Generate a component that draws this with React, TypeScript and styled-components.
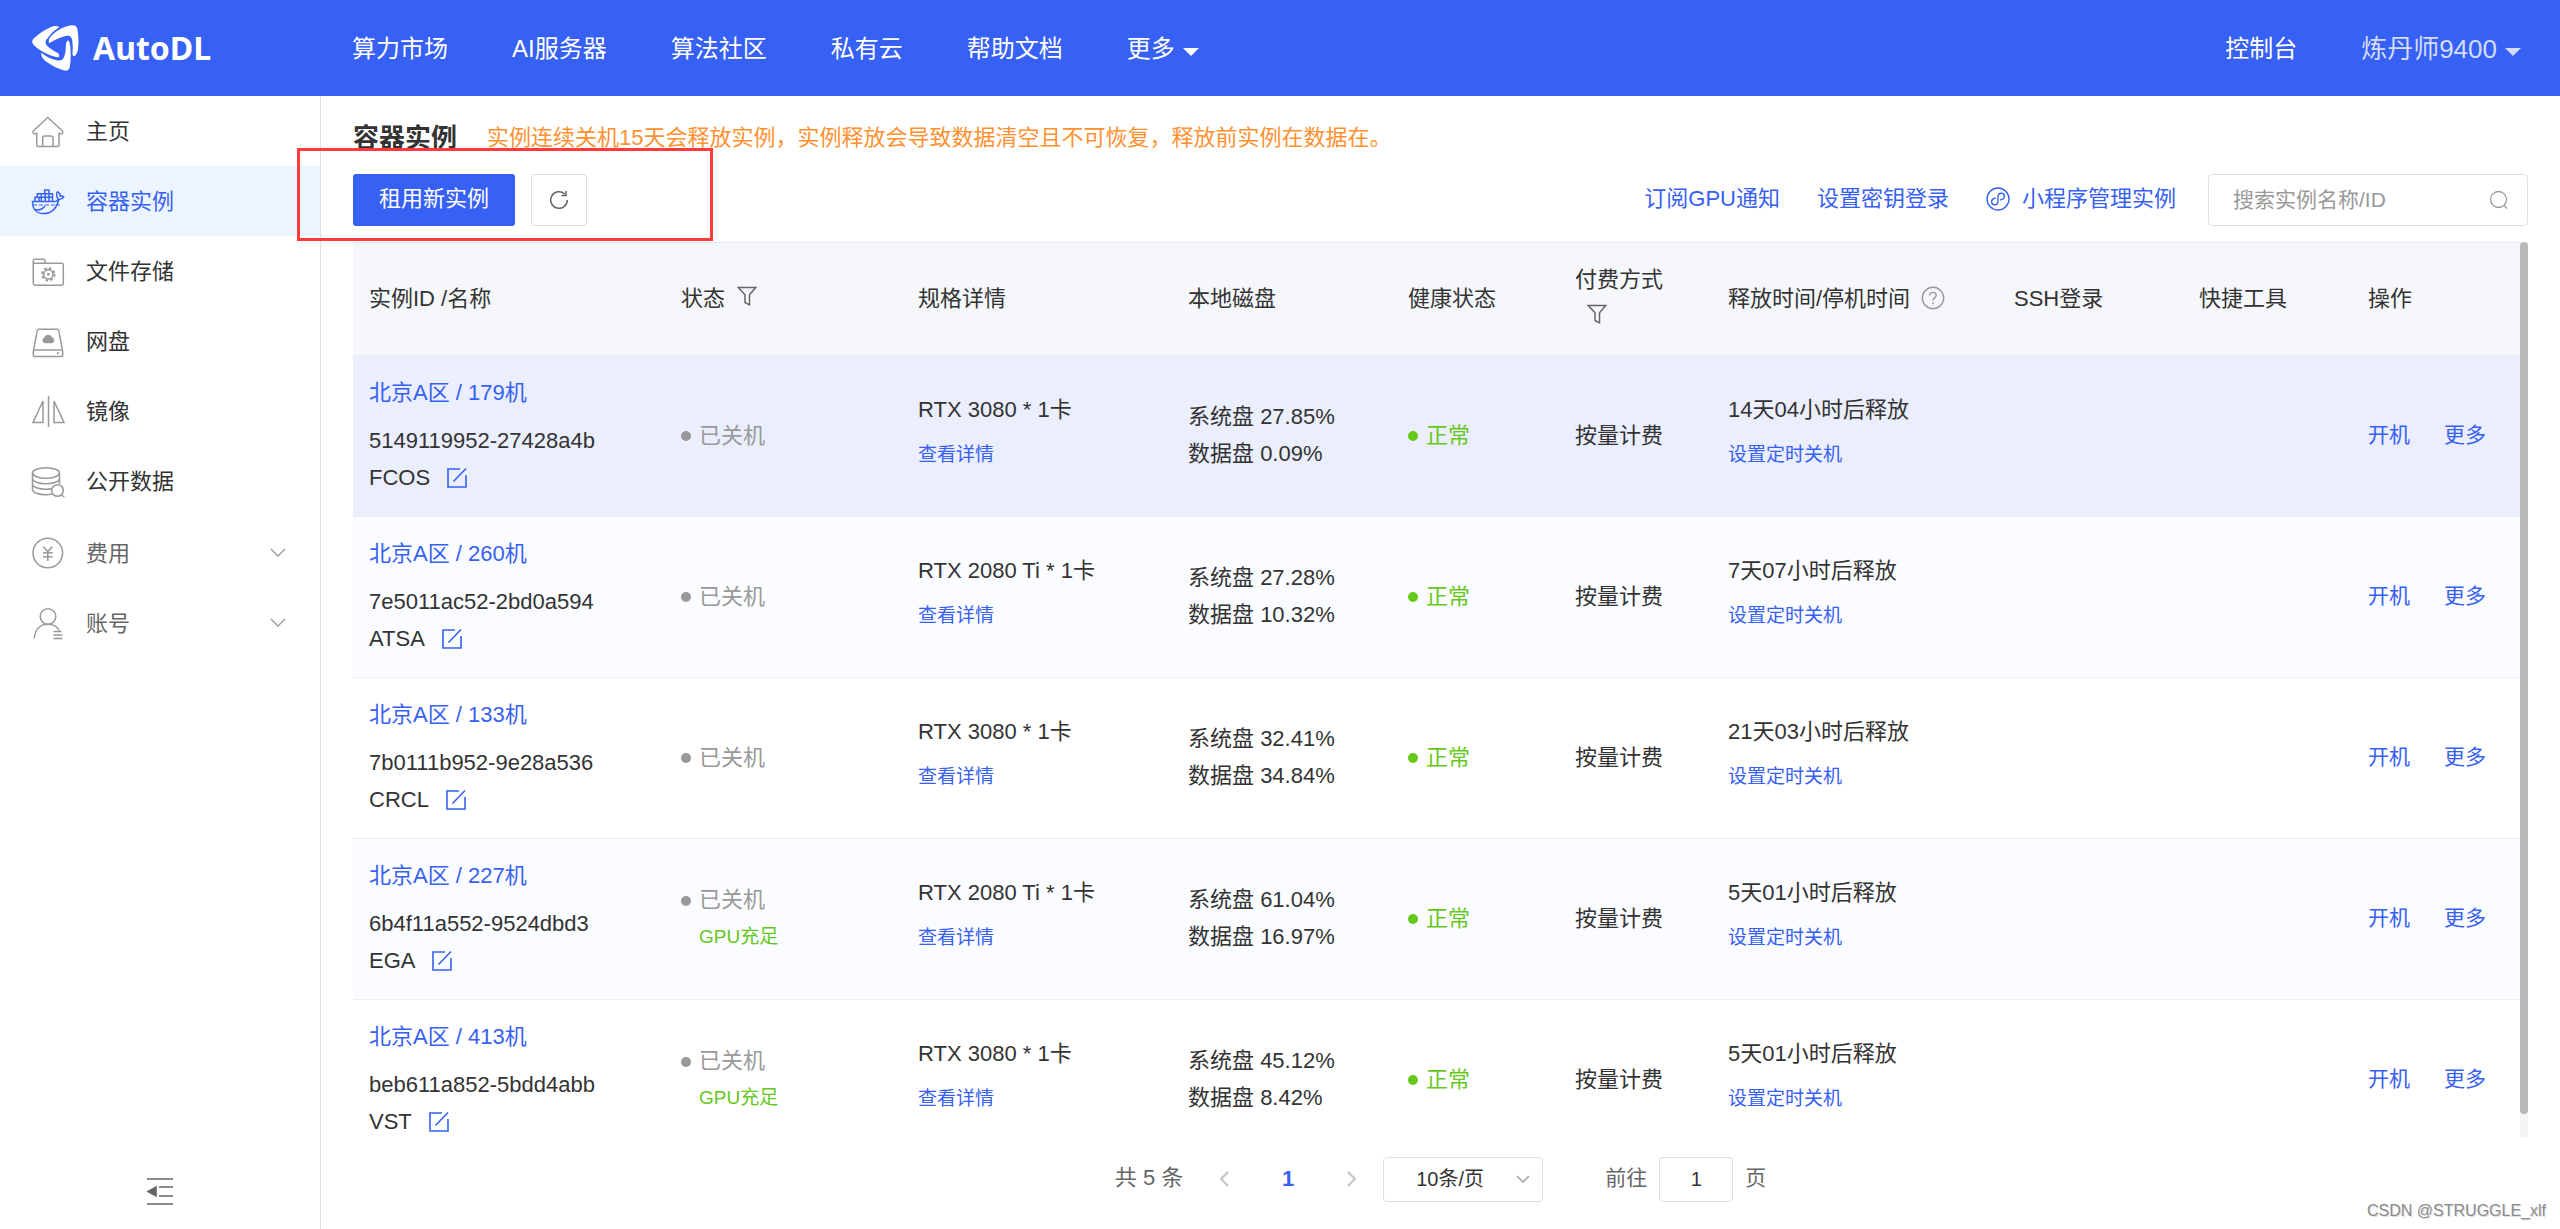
import React from "react";
import styled, { createGlobalStyle, css } from "styled-components";

const color = {
  primary: "#3760f4",
  text: "#333333",
  secondary: "#666666",
  muted: "#999999",
  border: "#dcdfe6",
  line: "#ebeef5",
  success: "#66c81b",
  warning: "#ff9130",
};

const GlobalStyle = createGlobalStyle`
  * { box-sizing: border-box; }
  body { margin: 0; background: #fff; }
  body, button, input, select {
    font-family: "Liberation Sans", "Noto Sans CJK SC", sans-serif;
    font-size: 22px;
    line-height: 36px;
    color: ${color.text};
  }
  a { color: inherit; text-decoration: none; }
  button { border: 0; padding: 0; background: none; color: inherit; cursor: pointer; }
  svg { display: block; flex: none; }
`;

const Page = styled.div`
  display: flex;
  flex-direction: column;
  height: 100vh;
`;

/* ---------- top bar ---------- */

const TopBar = styled.header`
  display: flex;
  align-items: center;
  flex: none;
  height: 96px;
  padding: 0 39px 0 32px;
  background: ${color.primary};
  color: #fff;
`;

const Brand = styled.a`
  display: flex;
  align-items: center;
  gap: 14px;
  width: 320px;
  font-family: "Noto Sans", sans-serif;
  font-size: 32px;
  font-weight: 700;
  line-height: 48px;
`;

const TopNav = styled.nav`
  display: flex;
  flex: 1;
  gap: 64px;
  padding-top: 2px;
`;

const TopActions = styled.div`
  display: flex;
  align-items: center;
  gap: 64px;
  padding-top: 2px;
`;

const topItem = css`
  display: flex;
  align-items: center;
  gap: 8px;
  font-size: 24px;
  line-height: 38px;
  color: #fff;
`;

const TopLink = styled.a`
  ${topItem}
`;

const TopMenu = styled.button<{ $user?: boolean }>`
  ${topItem}
  ${(p) => p.$user && "font-size: 26px; color: #d3dcfd;"}
  svg {
    margin-top: 4px;
  }
`;

/* ---------- side bar ---------- */

const Body = styled.div`
  display: flex;
  flex: 1;
  min-height: 0;
`;

const SideBar = styled.aside`
  display: flex;
  flex-direction: column;
  flex: none;
  width: 321px;
  border-right: 1px solid ${color.border};
`;

const SideGroup = styled.nav`
  & + & {
    margin-top: 2px;
  }
`;

const sideItem = css`
  display: flex;
  align-items: center;
  gap: 21px;
  width: 100%;
  height: 70px;
  padding: 0 34px 0 31px;
  text-align: left;
  svg {
    color: ${color.muted};
  }
`;

const SideLink = styled.a<{ $active?: boolean }>`
  ${sideItem}
  ${(p) =>
    p.$active &&
    css`
      background: #ecf5ff;
      color: ${color.primary};
      svg {
        color: ${color.primary};
      }
    `}
`;

const SideToggle = styled.button`
  ${sideItem}
  color: ${color.secondary};
`;

const SideLabel = styled.span`
  flex: 1;
  padding-top: 2px;
`;

const CollapseButton = styled.button`
  display: flex;
  justify-content: center;
  margin-top: auto;
  padding-bottom: 22px;
  color: ${color.secondary};
`;

/* ---------- content ---------- */

const Content = styled.main`
  display: flex;
  flex: 1;
  flex-direction: column;
  min-width: 0;
  padding: 24px 32px 0;
`;

const Heading = styled.div`
  display: flex;
  align-items: center;
  gap: 30px;
  margin-bottom: 18px;
`;

const Title = styled.h1`
  margin: 0;
  font-size: 26px;
  font-weight: 700;
`;

const Notice = styled.p`
  margin: 0;
  color: ${color.warning};
`;

const ToolBar = styled.div`
  position: relative;
  display: flex;
  align-items: center;
  gap: 16px;
  height: 52px;
  margin-bottom: 16px;
`;

const Highlight = styled.div`
  position: absolute;
  left: -56px;
  top: -26px;
  width: 416px;
  height: 93px;
  border: 3px solid #ff3a3a;
  pointer-events: none;
`;

const PrimaryButton = styled.button`
  width: 162px;
  height: 52px;
  padding-bottom: 2px;
  border-radius: 3px;
  background: ${color.primary};
  color: #fff;
`;

const IconButton = styled.button`
  display: flex;
  align-items: center;
  justify-content: center;
  width: 56px;
  height: 52px;
  border: 1px solid ${color.border};
  border-radius: 3px;
  color: ${color.secondary};
`;

const ToolLinks = styled.div`
  display: flex;
  align-items: center;
  gap: 37px;
  margin-left: auto;
  padding-bottom: 2px;
  color: ${color.primary};
`;

const ToolLink = styled.a`
  display: flex;
  align-items: center;
  gap: 12px;
`;

const SearchBox = styled.label`
  display: flex;
  align-items: center;
  width: 320px;
  height: 52px;
  margin-left: 16px;
  padding: 0 18px 0 24px;
  border: 1px solid ${color.border};
  border-radius: 4px;
  color: ${color.muted};
  input {
    flex: 1;
    min-width: 0;
    border: 0;
    padding: 0;
    outline: 0;
    background: none;
    font-size: 21px;
  }
  input::placeholder {
    color: ${color.muted};
    opacity: 1;
  }
`;

/* ---------- table ---------- */

const TableFrame = styled.div`
  display: flex;
  flex: 1;
  min-height: 0;
`;

const TableScroll = styled.div`
  flex: 1;
  min-width: 0;
  overflow: hidden;
`;

const ScrollTrack = styled.div`
  width: 8px;
  background: #f5f5f5;
`;

const ScrollThumb = styled.div`
  height: calc(100% - 23px);
  border-radius: 4px;
  background: #b8b8b8;
`;

const Table = styled.table`
  width: 100%;
  table-layout: fixed;
  border-collapse: separate;
  border-spacing: 0;
  line-height: 37px;
`;

const Col = styled.col<{ $w: number }>`
  width: ${(p) => p.$w}px;
`;

const Th = styled.th`
  height: 114px;
  padding: 0 16px 2px;
  border-top: 1px solid #e4e8f4;
  border-bottom: 1px solid ${color.line};
  background: #f5f7fb;
  font-weight: 400;
  text-align: left;
`;

const FilterButton = styled.button`
  margin: 0 12px;
  line-height: 20px;
  color: ${color.secondary};
  svg {
    display: inline-block;
    vertical-align: baseline;
  }
`;

const HelpMark = styled.span`
  margin-left: 11px;
  color: ${color.muted};
  svg {
    display: inline-block;
    vertical-align: -4px;
  }
`;

const Row = styled.tr<{ $tone: "hover" | "stripe" | "plain" }>`
  background: ${(p) => ({ hover: "#eaeefd", stripe: "#fafcff", plain: "#ffffff" })[p.$tone]};
`;

const Td = styled.td`
  height: 161px;
  padding: 0 16px 2px;
  border-bottom: 1px solid ${color.line};
  vertical-align: middle;
  white-space: nowrap;
`;

const Machine = styled.div`
  margin-bottom: 11px;
  color: ${color.primary};
`;

const NameLine = styled.div`
  display: flex;
  align-items: center;
  gap: 16px;
  button {
    color: ${color.primary};
  }
`;

const Status = styled.div<{ $ok?: boolean }>`
  display: flex;
  align-items: center;
  gap: 8px;
  color: ${(p) => (p.$ok ? color.success : color.muted)};
  &::before {
    content: "";
    width: 10px;
    height: 10px;
    margin-top: 2px;
    border-radius: 50%;
    background: currentColor;
  }
`;

const GpuHint = styled.div`
  padding-left: 18px;
  font-size: 19px;
  color: ${color.success};
`;

const Stack = styled.div`
  display: flex;
  flex-direction: column;
  align-items: flex-start;
  gap: 8px;
  padding-bottom: 7px;
`;

const SmallLink = styled.a`
  font-size: 19px;
  color: ${color.primary};
`;

const RowActions = styled.div`
  display: flex;
  gap: 34px;
  button {
    font-size: 21px;
    color: ${color.primary};
  }
`;

/* ---------- pagination ---------- */

const Pagination = styled.footer`
  position: relative;
  display: flex;
  align-items: center;
  justify-content: center;
  flex: none;
  height: 92px;
  padding-bottom: 8px;
  color: ${color.secondary};
`;

const Total = styled.span`
  padding-bottom: 3px;
`;

const Pager = styled.div`
  display: flex;
  align-items: center;
  justify-content: space-between;
  width: 138px;
  margin: 0 26px 0 36px;
  color: #c0c4cc;
`;

const PageNumber = styled.button`
  font-weight: 700;
  color: ${color.primary};
`;

const SizePicker = styled.div`
  position: relative;
  width: 160px;
  margin-right: 62px;
  color: ${color.muted};
  select {
    appearance: none;
    display: block;
    width: 100%;
    height: 45px;
    padding: 0 32px;
    border: 1px solid ${color.border};
    border-radius: 4px;
    background: #fff;
    font-size: 20px;
  }
  svg {
    position: absolute;
    right: 13px;
    top: 18px;
    pointer-events: none;
  }
`;

const Jump = styled.div`
  display: flex;
  align-items: center;
  gap: 12px;
  font-size: 21px;
  label,
  span {
    padding-bottom: 3px;
  }
  input {
    width: 74px;
    height: 45px;
    border: 1px solid ${color.border};
    border-radius: 4px;
    font-size: 20px;
    text-align: center;
  }
`;

const Watermark = styled.small`
  position: absolute;
  right: -18px;
  bottom: 8px;
  font-size: 16px;
  line-height: 20px;
  color: #8c8c8c;
  text-shadow: 1px 1px 0 #dddddd;
`;

/* ---------- drawings ---------- */

const Logo = () => (
  <svg width="47" height="46" viewBox="36 44 140 138" fill="#fff" aria-hidden="true">
    <path d="M118 50C107 45 99 47 88 52C70 60 54 72 41 84C34 92 35 98 43 106C60 122 86 135 112 141C118 141 119 134 114 129C102 122 92 116 84 109C74 101 74 93 82 84C92 70 103 59 118 50Z" />
    <path d="M87 99C83 90 88 81 98 72C114 58 133 48 152 45C164 43 170 47 172 58C175 75 176 95 174 112C173 124 170 132 163 137C159 138 157 135 157 130C158 115 158 102 156 90C154 78 148 75 137 77C119 81 102 89 87 99Z" />
    <path d="M64 127C61 137 68 146 80 155C95 166 113 175 130 180C141 183 147 179 149 169C152 152 152 135 151 118C151 107 149 98 145 90C139 92 137 98 137 106C137 117 136 127 133 136C129 149 122 152 110 150C94 147 78 139 64 127Z" />
  </svg>
);

const Caret = () => (
  <svg width="16" height="9" viewBox="0 0 16 9" fill="currentColor" aria-hidden="true">
    <path d="M0 1h16L8 9z" />
  </svg>
);

const SideIcon = ({ children }: { children: React.ReactNode }) => (
  <svg width="34" height="34" viewBox="0 0 34 34" fill="none" stroke="currentColor" strokeWidth="1.5" strokeLinejoin="round" aria-hidden="true">
    {children}
  </svg>
);

const HomeIcon = () => (
  <SideIcon>
    <path d="M16.7 3.5 2.2 17c-.6 1.500 0 2.800 1.300 2.800l2.300-.5V31c0 .9.6 1.500 1.500 1.500h19.200c.9 0 1.500-.6 1.500-1.500V19.300l2.300.5c1.300 0 1.900-1.300 1.200-2.800z" />
    <path d="M11.700 32.500V24c0-1.100.9-2 2-2H20c1.100 0 2 .9 2 2v8.500" />
  </SideIcon>
);

const DockerIcon = () => (
  <SideIcon>
    <path d="M1.500 17.500H23.500C25.500 17.500 27.200 16.500 26.800 14.500C25.300 12 25.300 9.500 26.500 7.700C28.500 9 29.300 11 29.200 12.300C30.500 11.800 32 12 32.800 12.800C31.800 14.600 30 15.300 28 15.200C25.800 23.500 20.500 29.600 12.500 29.600C5.500 29.600 1.500 25 1.500 17.500Z" />
    <path d="M4 17.300v-4h17.500v4M6.300 13.300V9.700h15.200v3.600M13.700 9.700V6H18v3.700M8 13.300v4M10.300 9.700v7.600M14.200 9.700v7.600M18 9.700v7.600" />
    <path d="M2 21h27" strokeWidth="1" strokeDasharray="4 2" />
    <path d="M3.500 25.500c4 1 8 0 10.500-3.500" />
  </SideIcon>
);

const FolderIcon = () => (
  <SideIcon>
    <path d="M2.300 9.300V6.800c0-.8.7-1.500 1.500-1.500h8.700c.8 0 1.500.7 1.500 1.500v2.500" />
    <path d="M2.300 9.300h28c1.100 0 2 .9 2 2v18c0 1.100-.9 2-2 2h-26c-1.100 0-2-.9-2-2z" />
    <circle cx="17.300" cy="20.300" r="4.700" strokeWidth="1.600" />
    <circle cx="17.300" cy="20.300" r="6.200" strokeWidth="2" strokeDasharray="2.400 2.470" />
    <circle cx="17.300" cy="20.300" r="1.400" fill="currentColor" stroke="none" />
  </SideIcon>
);

const DiskIcon = () => (
  <SideIcon>
    <path d="M2.500 26 6.200 6.800c.2-.9.800-1.500 1.700-1.500h18.200c.9 0 1.500.6 1.700 1.500L31.500 26" />
    <rect x="2.300" y="26" width="29.400" height="6.500" rx="1.800" />
    <path d="M14 19.200a2.900 2.900 0 0 1-.5-5.700 4 4 0 0 1 7.600 0 2.900 2.900 0 0 1-.4 5.700z" fill="currentColor" stroke="none" />
    <circle cx="26.800" cy="29.200" r="1.100" fill="currentColor" stroke="none" />
  </SideIcon>
);

const MirrorIcon = () => (
  <SideIcon>
    <path d="M17.500 2v31M12 7v21.500H2zM23 7v21.500h10z" strokeLinejoin="miter" />
  </SideIcon>
);

const DataIcon = () => (
  <SideIcon>
    <ellipse cx="15" cy="9" rx="13.500" ry="5.300" />
    <path d="M1.500 9v16.500c0 3 6 5.300 13.500 5.300 2.400 0 4.600-.2 6.500-.7M28.500 9v11" />
    <path d="M1.500 14.500c0 3 6 5.300 13.500 5.300s13.500-2.300 13.500-5.300M1.500 20c0 3 6 5.300 13.500 5.300 2 0 3.800-.1 5.400-.5" />
    <circle cx="26.500" cy="26.500" r="5.800" />
    <path d="m30.500 31 2.800 2" />
  </SideIcon>
);

const CostIcon = () => (
  <SideIcon>
    <circle cx="16.800" cy="17" r="14.800" />
    <path d="m12.300 10.500 4.500 5.300 4.500-5.300M16.800 15.800V25M12 16.800h9.600M12 20.800h9.600" />
  </SideIcon>
);

const AccountIcon = () => (
  <SideIcon>
    <circle cx="17" cy="10.500" r="7.800" />
    <path d="M3.300 32.500C4 23.500 9 18.300 17 18.300c5 0 9 2.200 11.300 6.200M22.500 25.500h8M22.500 29h9M22.500 32.500h9" strokeWidth="1.400" />
  </SideIcon>
);

const Chevron = ({ w, h, d, sw = 1.3 }: { w: number; h: number; d: string; sw?: number }) => (
  <svg width={w} height={h} viewBox={`0 0 ${w} ${h}`} fill="none" stroke="currentColor" strokeWidth={sw} aria-hidden="true">
    <path d={d} />
  </svg>
);

const CollapseIcon = () => (
  <svg width="28" height="30" viewBox="0 0 28 30" stroke="currentColor" strokeWidth="1.600" fill="none" aria-hidden="true">
    <path d="M1 2h26M13 10h14M13 19h14M1 27h26" />
    <path d="M10 10v9l-8-4.500z" fill="currentColor" />
  </svg>
);

const RefreshIcon = () => (
  <svg width="20" height="20" viewBox="0 0 20 20" fill="none" stroke="currentColor" strokeWidth="1.500" aria-hidden="true">
    <path d="M18.300 10a8.300 8.300 0 1 1-2.600-6M17 1v4.600h-4.600" />
  </svg>
);

const MiniProgramIcon = () => (
  <svg width="24" height="24" viewBox="0 0 24 24" fill="none" stroke="currentColor" strokeWidth="1.400" aria-hidden="true">
    <circle cx="12" cy="12" r="11" />
    <path d="M9.300 11.200c-2.300.3-3.700 1.800-3.700 3.500 0 1.800 1.400 3 3 3 2 0 3.400-1.500 3.400-3.500V9.800c0-2 1.400-3.500 3.400-3.500 1.600 0 3 1.200 3 3 0 1.700-1.400 3.200-3.700 3.500" strokeLinecap="round" />
  </svg>
);

const SearchIcon = () => (
  <svg width="20" height="20" viewBox="0 0 20 20" fill="none" stroke="currentColor" strokeWidth="1.300" aria-hidden="true">
    <circle cx="9.500" cy="9.500" r="8" />
    <path d="m15 15.500 3 3" />
  </svg>
);

const FilterIcon = () => (
  <svg width="20" height="20" viewBox="0 0 20 20" fill="none" stroke="currentColor" strokeWidth="1.500" aria-hidden="true">
    <path d="M1.300 1.500h17.400l-6.200 7.300v10l-4.500-2.300V8.800z" />
  </svg>
);

const HelpIcon = () => (
  <svg width="24" height="24" viewBox="0 0 24 24" fill="none" stroke="currentColor" strokeWidth="1.400" aria-hidden="true">
    <circle cx="12" cy="12" r="10.700" />
    <path d="M8.800 9.500c0-1.900 1.400-3.100 3.200-3.100s3.200 1.200 3.200 2.900c0 2.500-3.200 2.600-3.200 5.200M12 16.200v2" />
  </svg>
);

const EditIcon = () => (
  <svg width="22" height="22" viewBox="0 0 22 22" fill="none" stroke="currentColor" strokeWidth="1.600" aria-hidden="true">
    <path d="M14 2H2v18h18V8M7.500 14.500 20 1.500" />
  </svg>
);

/* ---------- data ---------- */

const topLinks = ["算力市场", "AI服务器", "算法社区", "私有云", "帮助文档"];

const sideLinks = [
  { label: "主页", icon: <HomeIcon /> },
  { label: "容器实例", icon: <DockerIcon />, active: true },
  { label: "文件存储", icon: <FolderIcon /> },
  { label: "网盘", icon: <DiskIcon /> },
  { label: "镜像", icon: <MirrorIcon /> },
  { label: "公开数据", icon: <DataIcon /> },
];

const sideMenus = [
  { label: "费用", icon: <CostIcon /> },
  { label: "账号", icon: <AccountIcon /> },
];

const columns: { label: string; width: number; filter?: boolean; help?: boolean }[] = [
  { label: "实例ID /名称", width: 312 },
  { label: "状态", width: 237, filter: true },
  { label: "规格详情", width: 270 },
  { label: "本地磁盘", width: 220 },
  { label: "健康状态", width: 167 },
  { label: "付费方式", width: 153, filter: true },
  { label: "释放时间/停机时间", width: 286, help: true },
  { label: "SSH登录", width: 185 },
  { label: "快捷工具", width: 169 },
  { label: "操作", width: 168 },
];

const instances = [
  { machine: "179机", id: "5149119952-27428a4b", name: "FCOS", gpu: "RTX 3080 * 1卡", sys: "27.85%", data: "0.09%", release: "14天04小时后释放" },
  { machine: "260机", id: "7e5011ac52-2bd0a594", name: "ATSA", gpu: "RTX 2080 Ti * 1卡", sys: "27.28%", data: "10.32%", release: "7天07小时后释放" },
  { machine: "133机", id: "7b0111b952-9e28a536", name: "CRCL", gpu: "RTX 3080 * 1卡", sys: "32.41%", data: "34.84%", release: "21天03小时后释放" },
  { machine: "227机", id: "6b4f11a552-9524dbd3", name: "EGA", gpu: "RTX 2080 Ti * 1卡", sys: "61.04%", data: "16.97%", release: "5天01小时后释放", enough: true },
  { machine: "413机", id: "beb611a852-5bdd4abb", name: "VST", gpu: "RTX 3080 * 1卡", sys: "45.12%", data: "8.42%", release: "5天01小时后释放", enough: true },
];

export default function App() {
  return (
    <Page>
      <GlobalStyle />
      <TopBar>
        <Brand href="#">
          <Logo />
          AutoDL
        </Brand>
        <TopNav>
          {topLinks.map((label) => (
            <TopLink href="#" key={label}>
              {label}
            </TopLink>
          ))}
          <TopMenu>
            更多
            <Caret />
          </TopMenu>
        </TopNav>
        <TopActions>
          <TopLink href="#">控制台</TopLink>
          <TopMenu $user>
            炼丹师9400
            <Caret />
          </TopMenu>
        </TopActions>
      </TopBar>

      <Body>
        <SideBar>
          <SideGroup>
            {sideLinks.map((item) => (
              <SideLink href="#" key={item.label} $active={item.active}>
                {item.icon}
                <SideLabel>{item.label}</SideLabel>
              </SideLink>
            ))}
          </SideGroup>
          <SideGroup>
            {sideMenus.map((item) => (
              <SideToggle key={item.label}>
                {item.icon}
                <SideLabel>{item.label}</SideLabel>
                <Chevron w={16} h={10} d="M1 1l7 7 7-7" />
              </SideToggle>
            ))}
          </SideGroup>
          <CollapseButton aria-label="收起菜单">
            <CollapseIcon />
          </CollapseButton>
        </SideBar>

        <Content>
          <Heading>
            <Title>容器实例</Title>
            <Notice>实例连续关机15天会释放实例，实例释放会导致数据清空且不可恢复，释放前实例在数据在。</Notice>
          </Heading>

          <ToolBar>
            <PrimaryButton>租用新实例</PrimaryButton>
            <IconButton aria-label="刷新">
              <RefreshIcon />
            </IconButton>
            <ToolLinks>
              <ToolLink href="#">订阅GPU通知</ToolLink>
              <ToolLink href="#">设置密钥登录</ToolLink>
              <ToolLink href="#">
                <MiniProgramIcon />
                小程序管理实例
              </ToolLink>
            </ToolLinks>
            <SearchBox>
              <input type="text" placeholder="搜索实例名称/ID" aria-label="搜索实例名称/ID" />
              <SearchIcon />
            </SearchBox>
            <Highlight />
          </ToolBar>

          <TableFrame>
            <TableScroll>
              <Table>
                <colgroup>
                  {columns.map((c) => (
                    <Col key={c.label} $w={c.width} />
                  ))}
                </colgroup>
                <thead>
                  <tr>
                    {columns.map((c) => (
                      <Th key={c.label}>
                        {c.label}
                        {c.filter && (
                          <FilterButton aria-label="筛选">
                            <FilterIcon />
                          </FilterButton>
                        )}
                        {c.help && (
                          <HelpMark>
                            <HelpIcon />
                          </HelpMark>
                        )}
                      </Th>
                    ))}
                  </tr>
                </thead>
                <tbody>
                  {instances.map((it, i) => (
                    <Row key={it.id} $tone={i === 0 ? "hover" : i % 2 ? "stripe" : "plain"}>
                      <Td>
                        <Machine>北京A区 / {it.machine}</Machine>
                        <div>{it.id}</div>
                        <NameLine>
                          {it.name}
                          <button aria-label="修改名称">
                            <EditIcon />
                          </button>
                        </NameLine>
                      </Td>
                      <Td>
                        <Status>已关机</Status>
                        {it.enough && <GpuHint>GPU充足</GpuHint>}
                      </Td>
                      <Td>
                        <Stack>
                          {it.gpu}
                          <SmallLink href="#">查看详情</SmallLink>
                        </Stack>
                      </Td>
                      <Td>
                        <div>系统盘 {it.sys}</div>
                        <div>数据盘 {it.data}</div>
                      </Td>
                      <Td>
                        <Status $ok>正常</Status>
                      </Td>
                      <Td>按量计费</Td>
                      <Td>
                        <Stack>
                          {it.release}
                          <SmallLink href="#">设置定时关机</SmallLink>
                        </Stack>
                      </Td>
                      <Td />
                      <Td />
                      <Td>
                        <RowActions>
                          <button>开机</button>
                          <button>更多</button>
                        </RowActions>
                      </Td>
                    </Row>
                  ))}
                </tbody>
              </Table>
            </TableScroll>
            <ScrollTrack>
              <ScrollThumb />
            </ScrollTrack>
          </TableFrame>

          <Pagination>
            <Total>共 5 条</Total>
            <Pager>
              <button aria-label="上一页">
                <Chevron w={10} h={16} d="M9 1L2 8l7 7" sw={2} />
              </button>
              <PageNumber>1</PageNumber>
              <button aria-label="下一页">
                <Chevron w={10} h={16} d="M1 1l7 7-7 7" sw={2} />
              </button>
            </Pager>
            <SizePicker>
              <select aria-label="每页条数" defaultValue="10">
                <option value="10">10条/页</option>
              </select>
              <Chevron w={14} h={9} d="M1 1l6 6 6-6" />
            </SizePicker>
            <Jump>
              <label htmlFor="page">前往</label>
              <input id="page" type="text" defaultValue="1" />
              <span>页</span>
            </Jump>
            <Watermark>CSDN @STRUGGLE_xlf</Watermark>
          </Pagination>
        </Content>
      </Body>
    </Page>
  );
}
